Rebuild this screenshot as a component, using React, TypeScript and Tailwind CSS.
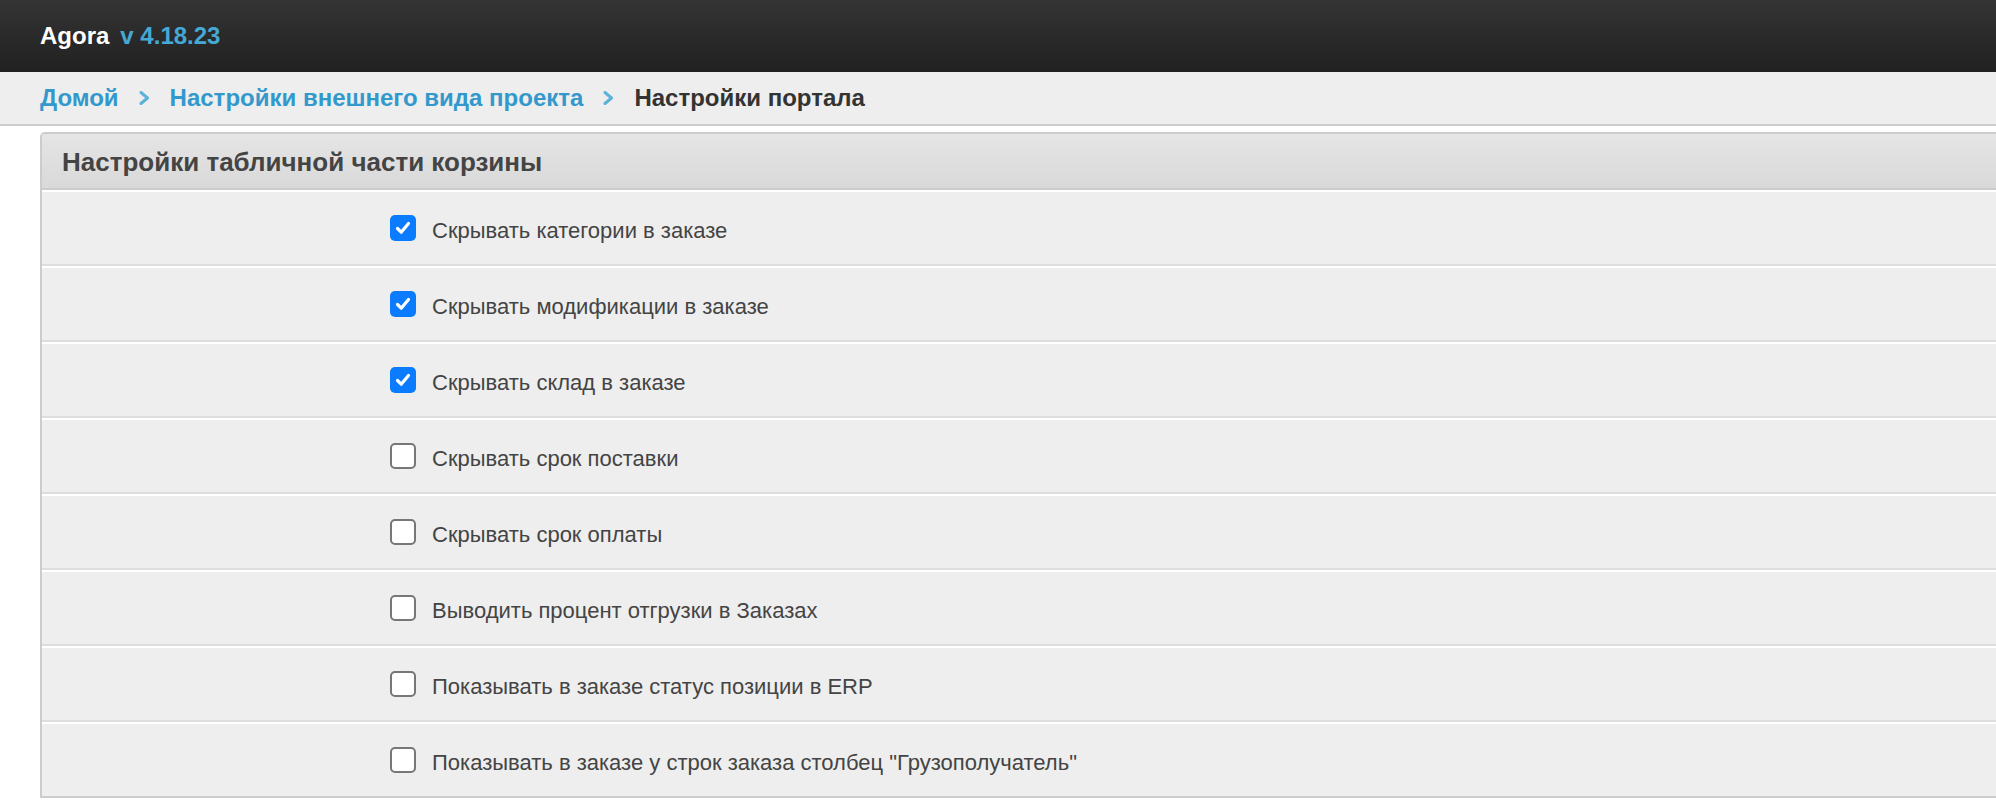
import React from 'react'

const rows = [
  { label: 'Скрывать категории в заказе', checked: true },
  { label: 'Скрывать модификации в заказе', checked: true },
  { label: 'Скрывать склад в заказе', checked: true },
  { label: 'Скрывать срок поставки', checked: false },
  { label: 'Скрывать срок оплаты', checked: false },
  { label: 'Выводить процент отгрузки в Заказах', checked: false },
  { label: 'Показывать в заказе статус позиции в ERP', checked: false },
  { label: 'Показывать в заказе у строк заказа столбец "Грузополучатель"', checked: false },
]

function Chevron() {
  return (
    <svg width="11" height="14" viewBox="0 0 11 14" className="mx-[20px] shrink-0">
      <path d="M2 1.5 L8.5 7 L2 12.5" fill="none" stroke="#5cb2da" strokeWidth="3" strokeLinecap="round" strokeLinejoin="round" />
    </svg>
  )
}

function Checkbox({ checked }: { checked: boolean }) {
  if (checked) {
    return (
      <span className="w-[26px] h-[26px] rounded-[5px] bg-[#0b7bff] flex items-center justify-center shrink-0">
        <svg width="18" height="18" viewBox="0 0 18 18">
          <path d="M3.5 9.5 L7.2 13.2 L14.5 4.5" fill="none" stroke="#fff" strokeWidth="3.2" strokeLinecap="round" strokeLinejoin="round" />
        </svg>
      </span>
    )
  }
  return <span className="w-[26px] h-[26px] rounded-[5px] bg-white border-2 border-[#777] shrink-0" />
}

export default function App() {
  return (
    <div className="min-h-screen bg-white overflow-hidden font-['Liberation_Sans',Arial,sans-serif]">
      <header className="h-[72px] bg-gradient-to-b from-[#343434] to-[#212121] flex items-center pl-[40px]">
        <span className="text-[24px] font-bold text-white">Agora</span>
        <span className="text-[24px] font-bold text-[#45a9d5] ml-[11px]">v 4.18.23</span>
      </header>

      <nav className="h-[54px] bg-[#eeeeee] border-b-2 border-[#cccccc] flex items-center pl-[40px] text-[24px] font-bold">
        <a href="#" className="text-[#3399cc]">Домой</a>
        <Chevron />
        <a href="#" className="text-[#3399cc]">Настройки внешнего вида проекта</a>
        <Chevron />
        <span className="text-[#333333]">Настройки портала</span>
      </nav>

      <section className="mt-[6px] ml-[40px] w-[2000px] border-2 border-[#cccccc] rounded-t-[5px]">
        <div className="h-[56px] bg-gradient-to-b from-[#e5e5e5] to-[#d9d9d9] border-b-2 border-[#cccccc] flex items-center pl-[20px] pt-[2px]">
          <h2 className="text-[26px] font-bold text-[#444444]">Настройки табличной части корзины</h2>
        </div>
        <div className="border-t-2 border-white">
          {rows.map((row, i) => (
            <div
              key={row.label}
              className={
                i < rows.length - 1
                  ? 'h-[76px] bg-[#eeeeee] border-b-2 border-white shadow-[inset_0_-2px_0_#dddddd] flex items-start'
                  : 'h-[72px] bg-[#eeeeee] flex items-start'
              }
            >
              <label className="h-[72px] flex items-center pl-[348px] gap-[16px] cursor-pointer">
                <Checkbox checked={row.checked} />
                <span className="text-[22px] text-[#444444] pt-[4px]">{row.label}</span>
              </label>
            </div>
          ))}
        </div>
      </section>
    </div>
  )
}
